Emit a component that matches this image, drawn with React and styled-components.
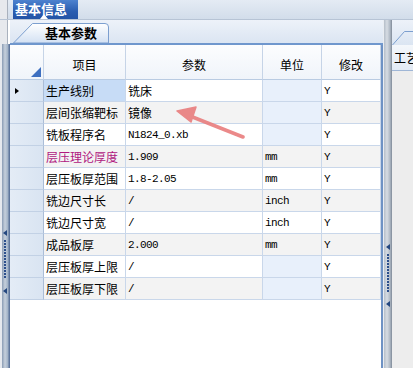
import React from 'react';
import styled, { createGlobalStyle } from 'styled-components';

const Global = createGlobalStyle`
  html, body { margin: 0; padding: 0; background: #fff; }
  body {
    font-family: "Noto Sans CJK SC", "Noto Sans", sans-serif;
    font-size: 12px;
    overflow: hidden;
  }
`;

const Page = styled.div`
  position: relative;
  width: 413px;
  height: 368px;
  display: flex;
  flex-direction: column;
  overflow: hidden;
  background: #fff;
`;

const TopBar = styled.div`
  height: 20px;
  flex: none;
  display: flex;
  background: linear-gradient(#e4ebf4, #d2ddea);
  border-bottom: 1px solid #b7c4d5;
  box-sizing: border-box;
`;

const TopEdge = styled.div`
  width: 8px;
  background: #e7e9ed;
  border-right: 1px solid #a9b1bd;
  box-sizing: border-box;
  margin-right: 5px;
`;

const MainTab = styled.div`
  position: relative;
  width: 65px;
  height: 19px;
  background: linear-gradient(#4d82cf, #2a5db0 60%, #2454a6);
  color: #fff;
  font-weight: bold;
  font-size: 13px;
  line-height: 18px;
  padding-left: 2px;
  box-sizing: border-box;
  white-space: nowrap;
  &::after {
    content: "";
    position: absolute;
    left: 27px;
    bottom: 0;
    border-left: 4px solid transparent;
    border-right: 4px solid transparent;
    border-bottom: 5px solid #fff;
  }
`;

const Body = styled.div`
  flex: 1;
  display: flex;
  min-height: 0;
`;

const LeftSplit = styled.div`
  width: 10px;
  flex: none;
  display: flex;
  flex-direction: column;
  align-items: stretch;
`;

const SplitTop = styled.div`
  height: 24px;
  flex: none;
  background: #e7e9ed;
  border-right: 1px solid #a9b1bd;
  box-sizing: border-box;
  width: 8px;
`;

const SplitBar = styled.div`
  flex: 1;
  display: flex;
  flex-direction: column;
  align-items: center;
  padding-top: ${p => p.$top}px;
  box-sizing: border-box;
  background: ${p => p.$bg};
`;

const GripArrow = styled.div`
  width: 0;
  height: 0;
  border-top: 3px solid transparent;
  border-bottom: 3px solid transparent;
  border-right: 4px solid #24477f;
  margin-left: ${p => p.$shift || 0}px;
`;

const GripDots = styled.div`
  width: 2px;
  height: ${p => p.$h}px;
  margin: ${p => p.$m};
  margin-left: ${p => p.$shift || 0}px;
  background: repeating-linear-gradient(#2c4f8c 0 2px, transparent 2px 3px);
`;

const Center = styled.div`
  width: 373px;
  flex: none;
  display: flex;
  flex-direction: column;
`;

const TabStrip = styled.div`
  height: 25px;
  flex: none;
  display: flex;
  align-items: flex-end;
  background: linear-gradient(#edf2f9, #dbe5f2);
  border-bottom: 2px solid #6f97cd;
  box-sizing: border-box;
  padding-left: 3px;
`;

const SubTab = styled.div`
  position: relative;
  width: 96px;
  height: 20px;
  flex: none;
  box-sizing: border-box;
  padding-left: 32px;
  font-weight: bold;
  font-size: 13px;
  line-height: 19px;
  color: #000;
  & > svg {
    position: absolute;
    left: 0;
    top: 0;
  }
  & > span {
    position: relative;
  }
`;

const GridWrap = styled.div`
  flex: 1;
  background: #fff;
  border-right: 2px solid #6e92c4;
  box-sizing: border-box;
`;

const Table = styled.div`
  display: grid;
  grid-template-columns: 34px 82px 137px 59px 59px;
  grid-template-rows: 35px;
  grid-auto-rows: 22px;
`;

const HeadCell = styled.div`
  position: relative;
  display: flex;
  align-items: center;
  justify-content: center;
  padding-top: 4px;
  box-sizing: border-box;
  background: linear-gradient(#fcfdfe, #f0f4fa);
  border-right: 1px solid #c6d4e7;
  border-bottom: 1px solid #b9cbe2;
  color: #000;
  font-size: 12px;
`;

const CornerMark = styled.div`
  position: absolute;
  right: 2px;
  bottom: 2px;
  width: 0;
  height: 0;
  border-left: 10px solid transparent;
  border-bottom: 10px solid #3d6fc0;
`;

const RowHead = styled.div`
  display: flex;
  align-items: center;
  padding-left: 5px;
  box-sizing: border-box;
  background: linear-gradient(to right, #e4ecf6, #d9e4f2);
  border-right: 1px solid #aabdd7;
  border-bottom: 1px solid #c2d1e5;
`;

const RowArrow = styled.div`
  width: 0;
  height: 0;
  border-top: 3.5px solid transparent;
  border-bottom: 3.5px solid transparent;
  border-left: 4px solid #000;
`;

const Cell = styled.div`
  display: flex;
  align-items: center;
  padding-left: 2px;
  box-sizing: border-box;
  overflow: hidden;
  white-space: nowrap;
  background: ${p => p.$bg};
  color: ${p => p.$color || '#000'};
  border-right: 1px solid #c9d7ea;
  border-bottom: 1px solid #c9d7ea;
  font-family: ${p => p.$mono
    ? '"Liberation Mono", "DejaVu Sans Mono", monospace'
    : '"Noto Sans CJK SC", "Noto Sans", sans-serif'};
  font-size: ${p => (p.$mono ? '11px' : '12px')};
  letter-spacing: ${p => (p.$mono ? '-0.6px' : '0')};
`;

const RightSplit = styled.div`
  width: 9px;
  flex: none;
  display: flex;
  flex-direction: column;
  align-items: center;
  padding-top: 224px;
  box-sizing: border-box;
  background: linear-gradient(to right, #e9edf2 0 1px, #b5bec9 1px, #d6dce3 4px, #aeb8c4 7px, #7f8a98 9px);
`;

const RightPanel = styled.div`
  flex: 1;
  display: flex;
  flex-direction: column;
  background: #ececec;
  overflow: hidden;
`;

const RightStrip = styled.div`
  height: 25px;
  flex: none;
  background: linear-gradient(#edf2f9, #dbe5f2);
  position: relative;
  & > svg {
    position: absolute;
    left: 0;
    bottom: 0;
  }
`;

const RightTab = styled.div`
  height: 25px;
  flex: none;
  background: linear-gradient(#f4f7fb, #e2eaf4);
  border-bottom: 1px solid #9fb6d6;
  padding-left: 2px;
  font-size: 12px;
  line-height: 26px;
  white-space: nowrap;
`;

const RightBody = styled.div`
  flex: 1;
  background: #ededed;
`;

const Arrow = styled.svg`
  position: absolute;
  left: 0;
  top: 0;
  pointer-events: none;
`;

const rows = [
  { item: '生产线别', param: '铣床', unit: '', sel: true },
  { item: '层间张缩靶标', param: '镜像', unit: '' },
  { item: '铣板程序名', param: 'N1824_0.xb', unit: '', mono: true },
  { item: '层压理论厚度', param: '1.909', unit: 'mm', mono: true, purple: true },
  { item: '层压板厚范围', param: '1.8-2.05', unit: 'mm', mono: true },
  { item: '铣边尺寸长', param: '/', unit: 'inch', mono: true },
  { item: '铣边尺寸宽', param: '/', unit: 'inch', mono: true },
  { item: '成品板厚', param: '2.000', unit: 'mm', mono: true },
  { item: '层压板厚上限', param: '/', unit: '', mono: true },
  { item: '层压板厚下限', param: '/', unit: '', mono: true },
];

export default function App() {
  return (
    <>
      <Global />
      <Page>
        <TopBar>
          <TopEdge />
          <MainTab>基本信息</MainTab>
        </TopBar>
        <Body>
          <LeftSplit>
            <SplitTop />
            <SplitBar
              $top={186}
              $bg="linear-gradient(to right, #e6e9ee 0 2px, #8a9cb4 2px, #c6d0dc 5px, #9fb0c5 8px, #5f769c 9px, #5f769c 10px)"
            >
              <GripArrow $shift={-1} />
              <GripDots $h={38} $m="4px 0 10px" $shift={-1} />
              <GripArrow $shift={-1} />
            </SplitBar>
          </LeftSplit>
          <Center>
            <TabStrip>
              <SubTab>
                <svg width="96" height="20" viewBox="0 0 96 20">
                  <defs>
                    <linearGradient id="tabg" x1="0" y1="0" x2="0" y2="1">
                      <stop offset="0" stopColor="#ffffff" />
                      <stop offset="1" stopColor="#d3e1f3" />
                    </linearGradient>
                  </defs>
                  <path
                    d="M0.5 20 L19.5 0.5 L92 0.5 Q95.5 0.5 95.5 4 L95.5 20 Z"
                    fill="url(#tabg)"
                    stroke="#7c9fcf"
                    strokeWidth="1"
                  />
                </svg>
                <span>基本参数</span>
              </SubTab>
            </TabStrip>
            <GridWrap>
              <Table>
                <HeadCell>
                  <CornerMark />
                </HeadCell>
                <HeadCell>项目</HeadCell>
                <HeadCell>参数</HeadCell>
                <HeadCell>单位</HeadCell>
                <HeadCell>修改</HeadCell>
                {rows.map((r, i) => {
                  const alt = i % 2 === 1 ? '#f3f3f3' : '#ffffff';
                  return (
                    <React.Fragment key={i}>
                      <RowHead>{r.sel && <RowArrow />}</RowHead>
                      <Cell $bg={r.sel ? '#c7dcf6' : alt} $color={r.purple ? '#b0177f' : '#000'}>
                        {r.item}
                      </Cell>
                      <Cell $bg={alt} $mono={r.mono}>{r.param}</Cell>
                      <Cell $bg={r.unit ? alt : '#e8f0fb'} $mono>{r.unit}</Cell>
                      <Cell $bg={alt} $mono>Y</Cell>
                    </React.Fragment>
                  );
                })}
              </Table>
            </GridWrap>
          </Center>
          <RightSplit>
            <GripArrow />
            <GripDots $h={38} $m="4px 0 9px" />
            <GripArrow />
          </RightSplit>
          <RightPanel>
            <RightStrip>
              <svg width="21" height="14" viewBox="0 0 21 14">
                <path d="M0.5 14 L12.5 0.5 L21 0.5" fill="none" stroke="#7c9fcf" strokeWidth="1" />
              </svg>
            </RightStrip>
            <RightTab>工艺</RightTab>
            <RightBody />
          </RightPanel>
        </Body>
        <Arrow width="413" height="368" viewBox="0 0 413 368">
          <g fill="#e97d7d" stroke="#e97d7d" opacity="0.9">
            <line x1="243" y1="137" x2="190" y2="116" strokeWidth="3.5" strokeLinecap="round" />
            <path d="M177 111 L196 107 L191 122 Z" strokeWidth="1.5" strokeLinejoin="round" />
          </g>
        </Arrow>
      </Page>
    </>
  );
}
